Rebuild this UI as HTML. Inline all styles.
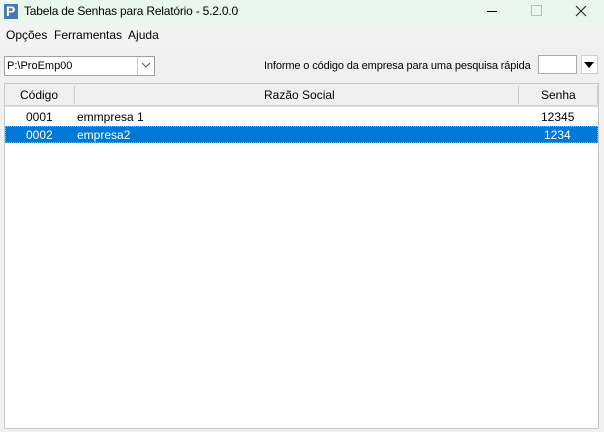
<!DOCTYPE html>
<html><head><style>
body{margin:0;width:604px;height:432px;background:#f0f0f0;font-family:"Liberation Sans",sans-serif;font-size:12px;color:#000;position:relative;overflow:hidden}
.a{position:absolute}
</style></head><body>
<div class="a" style="left:0;top:0;width:604px;height:23px;background:#e8f6ee"></div>
<div class="a" style="left:4px;top:4px;width:14px;height:15px;background:#4a78b0"></div>
<div class="a" style="left:6px;top:3px;color:#fff;font-weight:bold;font-size:14px">P</div>
<div class="a" style="left:24px;top:4px;font-size:12px;letter-spacing:-0.2px">Tabela de Senhas para Relatório - 5.2.0.0</div>
<div class="a" style="left:487px;top:11px;width:10px;height:1px;background:#000"></div>
<div class="a" style="left:531px;top:5px;width:9px;height:9px;border:1px solid #bbb"></div>
<svg class="a" style="left:575px;top:5px" width="12" height="12"><path d="M1 1L11 11M11 1L1 11" stroke="#222" stroke-width="1.1"/></svg>
<div class="a" style="left:0;top:23px;width:604px;height:24px;background:#f3f3f3"></div>
<div class="a" style="left:6px;top:28px">Opções&nbsp; Ferramentas&nbsp; Ajuda</div>
<div class="a" style="left:4px;top:56px;width:151px;height:20px;background:#fff;border:1px solid #a0a0a0;box-sizing:border-box"></div>
<div class="a" style="left:7px;top:60px;font-size:11px">P:\ProEmp00</div>
<div class="a" style="left:137px;top:57px;width:1px;height:18px;background:#ccc"></div>
<svg class="a" style="left:141px;top:62px" width="10" height="6"><path d="M1 1L5 5L9 1" stroke="#555" fill="none"/></svg>
<div class="a" style="left:264px;top:60px;font-size:11px;letter-spacing:-0.13px">Informe o código da empresa para uma pesquisa rápida</div>
<div class="a" style="left:538px;top:55px;width:39px;height:19px;background:#fff;border:1px solid #aaa;box-sizing:border-box"></div>
<div class="a" style="left:581px;top:55px;width:17px;height:19px;background:#fff;border:1px solid #ccc;box-sizing:border-box"></div>
<div class="a" style="left:584px;top:62px;width:0;height:0;border-left:5px solid transparent;border-right:5px solid transparent;border-top:6px solid #000"></div>
<div class="a" style="left:4px;top:83px;width:595px;height:346px;background:#fff;border:1px solid #c8c8c8;box-sizing:border-box"></div>
<div class="a" style="left:5px;top:84px;width:593px;height:23px;background:#f0f0f0;border-bottom:2px solid #d8d8d8;box-sizing:border-box"></div>
<div class="a" style="left:74px;top:86px;width:1px;height:18px;background:#ccc"></div>
<div class="a" style="left:518px;top:86px;width:1px;height:18px;background:#ccc"></div>
<div class="a" style="left:597px;top:86px;width:1px;height:18px;background:#ccc"></div>
<div class="a" style="left:20px;top:88px">Código</div>
<div class="a" style="left:264px;top:88px">Razão Social</div>
<div class="a" style="left:541px;top:88px">Senha</div>
<div class="a" style="left:26px;top:110px">0001</div>
<div class="a" style="left:77px;top:110px">emmpresa 1</div>
<div class="a" style="left:541px;top:110px">12345</div>
<div class="a" style="left:5px;top:126px;width:593px;height:17px;background:#0078d7;outline:1px dotted #e0a050;outline-offset:-1px"></div>
<div class="a" style="left:26px;top:128px;color:#fff">0002</div>
<div class="a" style="left:77px;top:128px;color:#fff">empresa2</div>
<div class="a" style="left:544px;top:128px;color:#fff">1234</div>
</body></html>
